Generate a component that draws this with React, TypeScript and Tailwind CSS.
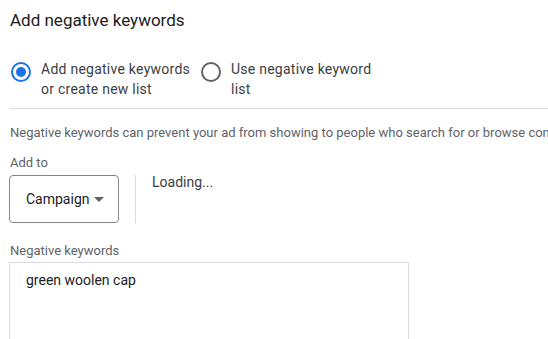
import { useState } from "react";

const font = { fontFamily: "Roboto, 'Liberation Sans', sans-serif" };

interface RadioOptionProps {
  checked: boolean;
  label: string;
  onSelect: () => void;
}

const RadioOption: React.FC<RadioOptionProps> = ({ checked, label, onSelect }) => (
  <button
    type="button"
    onClick={onSelect}
    className="flex items-start w-[190px] text-left cursor-pointer"
  >
    <span
      className={`mt-[3px] ml-px w-5 h-5 shrink-0 rounded-full border-2 flex items-center justify-center ${
        checked ? "border-[#1a73e8]" : "border-[#5f6368]"
      }`}
    >
      {checked && <span className="w-[10px] h-[10px] rounded-full bg-[#1a73e8]" />}
    </span>
    <span className="ml-[10px] w-[152px] text-[14px] leading-[20px] tracking-[0.25px] text-[#3c4043]">
      {label}
    </span>
  </button>
);

export default function App() {
  const [mode, setMode] = useState<"new" | "list">("new");

  return (
    <div
      className="w-[548px] h-[339px] overflow-hidden bg-white pl-[10px]"
      style={font}
    >
      <h1 className="pt-[8px] text-[17px] leading-[24px] text-[#202124]">
        Add negative keywords
      </h1>

      <div className="mt-[27px] flex">
        <RadioOption
          checked={mode === "new"}
          label="Add negative keywords or create new list"
          onSelect={() => setMode("new")}
        />
        <RadioOption
          checked={mode === "list"}
          label="Use negative keyword list"
          onSelect={() => setMode("list")}
        />
      </div>

      <div className="mt-[9px] h-px bg-[#dadce0]" />

      <p className="mt-[15px] text-[13px] leading-[18px] text-[#5f6368] whitespace-nowrap">
        Negative keywords can prevent your ad from showing to people who search for or browse content related to these terms.
      </p>

      <div className="mt-[12px] text-[13px] leading-[18px] text-[#5f6368]">Add to</div>

      <div className="flex">
        <div className="mt-[3px] -ml-px w-[110px] h-[48px] rounded-[4px] border border-[#80868b] flex items-center pl-[16px]">
          <span className="text-[14px] leading-[20px] text-[#202124]">Campaign</span>
          <span className="ml-[5px] w-0 h-0 border-l-[5px] border-r-[5px] border-t-[5px] border-l-transparent border-r-transparent border-t-[#5f6368]" />
        </div>
        <div className="mt-[3px] ml-[16px] w-px h-[48px] bg-[#dadce0]" />
        <div className="ml-[16px] text-[14px] leading-[20px] text-[#3c4043]">Loading...</div>
      </div>

      <div className="mt-[19px] text-[13px] leading-[18px] text-[#5f6368]">
        Negative keywords
      </div>
      <div className="mt-[2px] -ml-px w-[400px] h-[120px] border border-[#dadce0] pt-[5px] pl-[16px]">
        <span className="text-[14px] leading-[20px] text-[#202124]">green woolen cap</span>
      </div>
    </div>
  );
}
